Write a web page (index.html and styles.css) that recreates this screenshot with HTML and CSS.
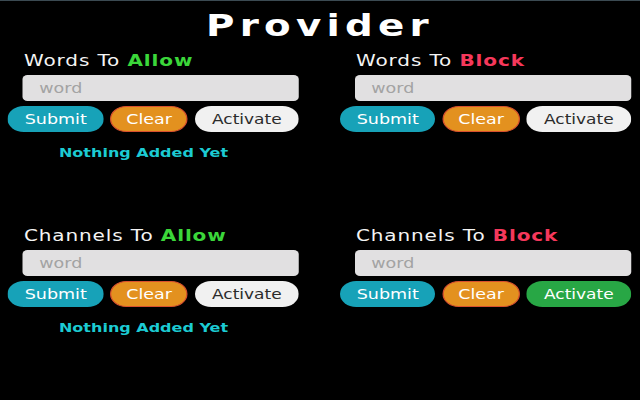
FILE: index.html
```html
<!DOCTYPE html>
<html lang="en">
<head>
<meta charset="utf-8">
<title>Provider</title>
<link rel="stylesheet" href="styles.css">
</head>
<body>
<div class="page">
<h1 class="title">Provider</h1>
<main class="grid">
  <section class="panel">
    <h2 class="panel-title">Words To <span class="allow">Allow</span></h2>
    <input class="field" type="text" placeholder="word">
    <div class="actions">
      <button class="btn btn-submit">Submit</button>
      <button class="btn btn-clear">Clear</button>
      <button class="btn btn-activate">Activate</button>
    </div>
    <p class="status">Nothing Added Yet</p>
  </section>
  <section class="panel">
    <h2 class="panel-title">Words To <span class="block">Block</span></h2>
    <input class="field" type="text" placeholder="word">
    <div class="actions">
      <button class="btn btn-submit">Submit</button>
      <button class="btn btn-clear">Clear</button>
      <button class="btn btn-activate">Activate</button>
    </div>
  </section>
  <section class="panel">
    <h2 class="panel-title">Channels To <span class="allow">Allow</span></h2>
    <input class="field" type="text" placeholder="word">
    <div class="actions">
      <button class="btn btn-submit">Submit</button>
      <button class="btn btn-clear">Clear</button>
      <button class="btn btn-activate">Activate</button>
    </div>
    <p class="status">Nothing Added Yet</p>
  </section>
  <section class="panel">
    <h2 class="panel-title">Channels To <span class="block">Block</span></h2>
    <input class="field" type="text" placeholder="word">
    <div class="actions">
      <button class="btn btn-submit">Submit</button>
      <button class="btn btn-clear">Clear</button>
      <button class="btn btn-activate btn-active">Activate</button>
    </div>
  </section>
</main>
</div>
</body>
</html>
```
FILE: styles.css
```css
html, body {
  margin: 0;
  padding: 0;
  background: #000;
  height: 100%;
  overflow: hidden;
}
body {
  border-top: 1px solid #3b4a52;
  box-sizing: border-box;
  font-family: "DejaVu Sans", "Liberation Sans", sans-serif;
  color: #f2f2f2;
}
/* the popup is rendered stretched horizontally */
.page {
  width: 512px;
  transform: scaleX(1.25);
  transform-origin: 0 0;
}
.title {
  margin: 4px 0 0;
  text-align: center;
  font-size: 31px;
  line-height: 40px;
  font-weight: bold;
  letter-spacing: 4.2px;
  color: #fff;
}
.grid {
  display: grid;
  grid-template-columns: 265.6px 1fr;
  row-gap: 64px;
  padding: 0 0 0 6.4px;
  margin-top: 5px;
}
.panel {
  display: flex;
  flex-direction: column;
  align-items: flex-start;
}
.panel-title {
  margin: 0 0 4px 12.8px;
  font-size: 16px;
  line-height: 21px;
  font-weight: normal;
  letter-spacing: 0.7px;
  color: #f4f4f4;
}
.allow, .block {
  font-weight: bold;
}
.allow { color: #3bd63a; }
.block { color: #f5385b; }
.field {
  margin: 0 0 0 12px;
  width: 221px;
  height: 26px;
  box-sizing: border-box;
  border: none;
  border-radius: 4px;
  background: #e1e0e1;
  padding: 0 13px;
  font-family: inherit;
  font-size: 14px;
  outline: none;
}
.field::placeholder {
  color: #a3a3a3;
}
.actions {
  display: flex;
  gap: 5.6px;
  margin-top: 5px;
}
.btn {
  height: 26px;
  border-radius: 13px;
  border: 1px solid transparent;
  font-family: inherit;
  font-size: 14px;
  padding: 0;
  color: #fff;
}
.btn-submit {
  width: 76.5px;
  background: #17a2b8;
}
.btn-clear {
  width: 61.6px;
  background: #e3911f;
  border-color: #d8502e;
}
.btn-activate {
  width: 83.6px;
  background: #f1f1f1;
  color: #2b2b2b;
  font-size: 13.6px;
}
.btn-active {
  background: #28a745;
  color: #fff;
}
.status {
  margin: 12px 0 0 40.8px;
  font-size: 12.8px;
  line-height: 17px;
  font-weight: bold;
  color: #1ccbd3;
}
```
